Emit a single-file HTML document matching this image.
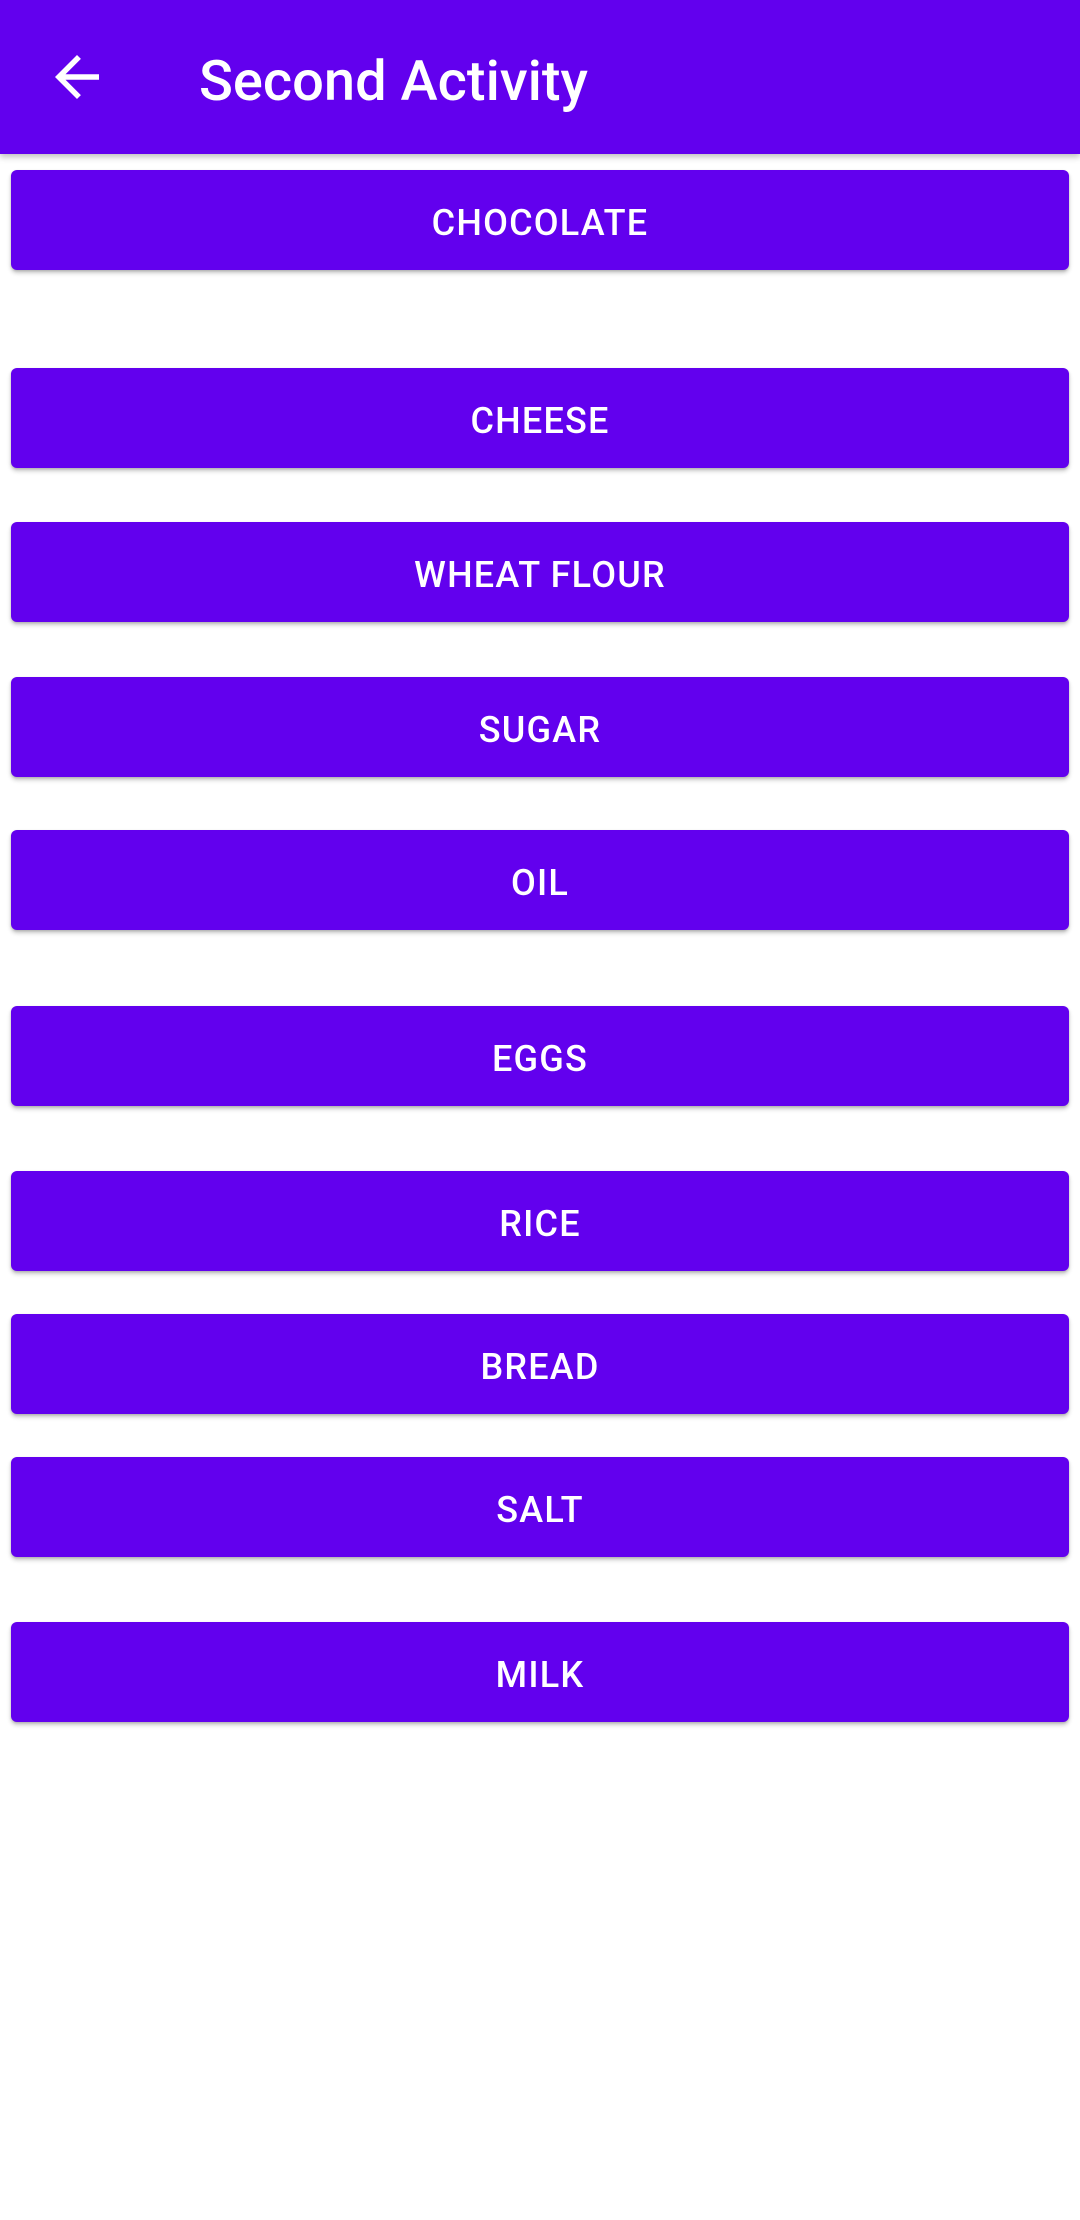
<!DOCTYPE html>
<html><head><meta charset="utf-8"><style>
html,body{margin:0;padding:0;background:#fff;width:1080px;height:2220px;overflow:hidden;font-family:"Roboto","Liberation Sans",sans-serif;}
.bar{position:absolute;left:0;top:0;width:1080px;height:154px;background:#6200EE;box-shadow:0 3px 6px rgba(0,0,0,0.25);z-index:2}
.bar svg{position:absolute;left:55px;top:55px}
.title{position:absolute;left:199px;top:44px;color:#fff;font-size:56px;line-height:74px;font-weight:500;letter-spacing:0px}
.btn{position:absolute;left:11px;width:1058px;height:100px;background:#6200EE;border-radius:6px;box-shadow:0 3px 4px rgba(0,0,0,0.22),0 1px 2px rgba(0,0,0,0.15);color:#fff;font-size:36px;font-weight:500;text-align:center;line-height:106px;letter-spacing:1.2px}
</style></head><body>
<div class="bar"><svg width="44" height="44" viewBox="4 4 16 16"><path d="M20 11H7.83l5.59-5.59L12 4l-8 8 8 8 1.41-1.41L7.83 13H20v-2z" fill="#fff"/></svg><div class="title">Second Activity</div></div>
<div class="btn" style="top:170px">CHOCOLATE</div>
<div class="btn" style="top:368px">CHEESE</div>
<div class="btn" style="top:522px">WHEAT FLOUR</div>
<div class="btn" style="top:677px">SUGAR</div>
<div class="btn" style="top:830px">OIL</div>
<div class="btn" style="top:1006px">EGGS</div>
<div class="btn" style="top:1171px">RICE</div>
<div class="btn" style="top:1314px">BREAD</div>
<div class="btn" style="top:1457px">SALT</div>
<div class="btn" style="top:1622px">MILK</div>
</body></html>
